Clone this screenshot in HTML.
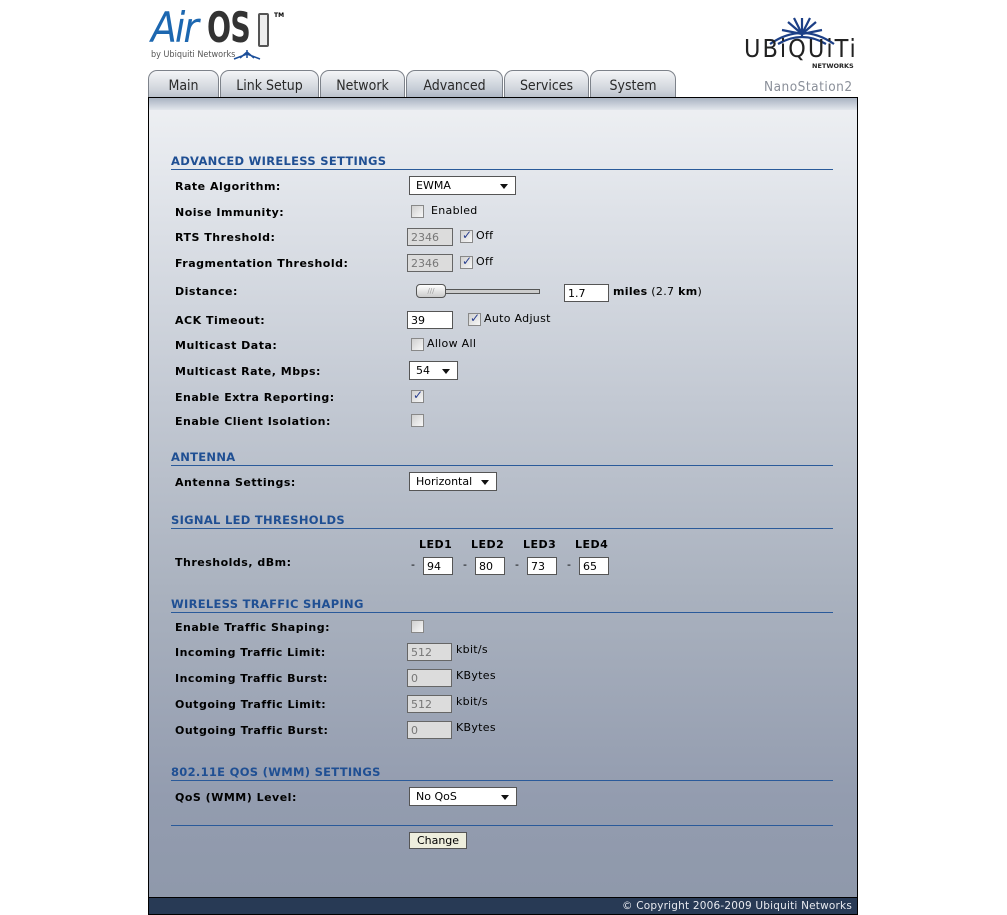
<!DOCTYPE html>
<html><head><meta charset="utf-8">
<style>
*{margin:0;padding:0;box-sizing:border-box}
body{width:1007px;height:915px;background:#fff;position:relative;overflow:hidden;font-family:"DejaVu Sans","Liberation Sans",sans-serif;font-size:11px;color:#000}
.a{position:absolute;white-space:nowrap}
.panel{position:absolute;left:148px;top:97px;width:710px;height:818px;border:1px solid #000;border-bottom:none;background:linear-gradient(#eef0f3 0px,#e6e9ee 60px,#c3c9d3 300px,#a9b1be 500px,#939caf 700px,#8e98aa 818px)}
.band{position:absolute;left:149px;top:98px;width:708px;height:12px;background:linear-gradient(#a9b3c2,#e2e6ec)}
.tab{position:absolute;top:70px;height:28px;border:1px solid #7d828a;border-bottom:none;border-radius:9px 9px 0 0;background:linear-gradient(#f4f5f7,#cfd4db 70%,#b8bfca);font-family:"DejaVu Sans Condensed","DejaVu Sans",sans-serif;font-size:14px;color:#2a2a2a;text-align:center;line-height:30px}
.tab.act{background:linear-gradient(#eef0f3,#c4cbd5 70%,#a9b3c2)}
.h{position:absolute;left:171px;font-weight:bold;color:#1f4f93;font-size:11.5px;letter-spacing:0.3px;transform:translateY(1px)}
.hl{position:absolute;left:171px;width:662px;height:1px;background:#2a5a9a}
.l{position:absolute;left:175px;font-weight:bold;font-size:11px;letter-spacing:0.5px;transform:translateY(1px)}
.sel{position:absolute;height:19px;border:1px solid #555;background:#fff;font-size:11px;line-height:18px;padding-left:6px}
.sel:after{content:"";position:absolute;right:7px;top:7px;border-left:4px solid transparent;border-right:4px solid transparent;border-top:5px solid #111}
.in{position:absolute;height:18px;border:1px solid #555;background:#fff;font-size:11px;line-height:17px;padding-left:3px}
.in.d{background:#dcdcdc;color:#777;border-color:#666}
.cb{position:absolute;width:13px;height:13px;border:1px solid #888;background:linear-gradient(135deg,#d0d0d0,#f8f8f8)}
.cb.k:after{content:"✓";position:absolute;left:1px;top:-3px;font-size:12px;color:#2a3f8f;font-weight:bold}
.t{position:absolute;font-size:11px;letter-spacing:0.3px;transform:translateY(1px)}
</style></head><body>

<!-- AirOS logo -->
<div class="a" style="left:151px;top:6px;font-family:'DejaVu Sans Condensed',sans-serif;font-style:italic;font-size:42px;color:#1c67b0;letter-spacing:-2px;line-height:44px">Air</div>
<div class="a" style="left:207px;top:6px;font-family:'DejaVu Sans Condensed',sans-serif;font-weight:bold;font-size:42px;color:#333;letter-spacing:-1px;line-height:44px;transform:scaleX(0.75);transform-origin:left">OS</div>
<div class="a" style="left:258px;top:13px;width:11px;height:34px;border:2px solid #555;border-radius:2px;background:#eee"></div>
<div class="a" style="left:274px;top:12px;font-size:6px;font-weight:bold">TM</div>
<div class="a" style="left:151px;top:50px;font-size:9px;color:#555;font-family:'DejaVu Sans Condensed',sans-serif">by Ubiquiti Networks</div>
<svg class="a" style="left:232px;top:49px" width="30" height="12"><path d="M2 10 L15 5 L28 10 M8 9 L15 3 L22 9 M15 1 L15 9" stroke="#1c4f9a" stroke-width="1.5" fill="none"/></svg>

<!-- Ubiquiti logo -->
<svg class="a" style="left:764px;top:16px" width="98" height="30"><g stroke="#1c3f86" stroke-width="2.2" fill="none"><path d="M6 28 Q38 6 70 28"/><path d="M14 28 Q38 14 62 28"/><path d="M38 2 L38 20 M24 6 L38 18 L52 6 M18 14 L38 18 L58 14 M30 2 L38 18 L46 2"/></g></svg>
<div class="a" style="left:744px;top:35px;font-family:'DejaVu Sans Condensed',sans-serif;font-size:25px;color:#222;letter-spacing:2px;line-height:28px">UBiQUiTi</div>
<div class="a" style="left:812px;top:62px;font-size:6.5px;font-weight:bold;color:#222">NETWORKS</div>

<!-- tabs -->
<div class="tab" style="left:148px;width:71px">Main</div>
<div class="tab" style="left:220px;width:99px">Link Setup</div>
<div class="tab" style="left:320px;width:85px">Network</div>
<div class="tab act" style="left:406px;width:97px">Advanced</div>
<div class="tab" style="left:504px;width:85px">Services</div>
<div class="tab" style="left:590px;width:86px">System</div>
<div class="a" style="left:764px;top:79px;font-size:13.5px;color:#8a8f99;font-family:'DejaVu Sans Condensed',sans-serif;letter-spacing:0.5px">NanoStation2</div>

<div class="panel"></div>
<div class="band"></div>

<!-- Advanced wireless -->
<div class="h" style="top:153px">ADVANCED WIRELESS SETTINGS</div>
<div class="hl" style="top:169px"></div>
<div class="l" style="top:179px">Rate Algorithm:</div>
<div class="sel" style="left:409px;top:176px;width:107px">EWMA</div>
<div class="l" style="top:205px">Noise Immunity:</div>
<div class="cb" style="left:411px;top:205px"></div><div class="t" style="left:431px;top:203px">Enabled</div>
<div class="l" style="top:230px">RTS Threshold:</div>
<div class="in d" style="left:407px;top:228px;width:46px">2346</div>
<div class="cb k" style="left:460px;top:230px"></div><div class="t" style="left:476px;top:228px">Off</div>
<div class="l" style="top:256px">Fragmentation Threshold:</div>
<div class="in d" style="left:407px;top:254px;width:46px">2346</div>
<div class="cb k" style="left:460px;top:256px"></div><div class="t" style="left:476px;top:254px">Off</div>
<div class="l" style="top:284px">Distance:</div>
<div class="a" style="left:444px;top:289px;width:96px;height:5px;background:#ccc;border:1px solid #555"></div>
<div class="a" style="left:416px;top:284px;width:30px;height:14px;border:1px solid #555;border-radius:4px;background:linear-gradient(#fff,#ccc);font-size:7px;color:#999;text-align:center;line-height:12px">///</div>
<div class="in" style="left:564px;top:284px;width:45px">1.7</div>
<div class="t" style="left:613px;top:284px"><b>miles</b> (2.7 <b>km</b>)</div>
<div class="l" style="top:313px">ACK Timeout:</div>
<div class="in" style="left:407px;top:311px;width:46px">39</div>
<div class="cb k" style="left:468px;top:313px"></div><div class="t" style="left:484px;top:311px">Auto Adjust</div>
<div class="l" style="top:338px">Multicast Data:</div>
<div class="cb" style="left:411px;top:338px"></div><div class="t" style="left:427px;top:336px">Allow All</div>
<div class="l" style="top:364px">Multicast Rate, Mbps:</div>
<div class="sel" style="left:409px;top:361px;width:49px">54</div>
<div class="l" style="top:390px">Enable Extra Reporting:</div>
<div class="cb k" style="left:411px;top:390px"></div>
<div class="l" style="top:414px">Enable Client Isolation:</div>
<div class="cb" style="left:411px;top:414px"></div>

<!-- Antenna -->
<div class="h" style="top:449px">ANTENNA</div>
<div class="hl" style="top:465px"></div>
<div class="l" style="top:475px">Antenna Settings:</div>
<div class="sel" style="left:409px;top:472px;width:88px">Horizontal</div>

<!-- LED -->
<div class="h" style="top:512px">SIGNAL LED THRESHOLDS</div>
<div class="hl" style="top:528px"></div>
<div class="l" style="left:419px;top:537px">LED1</div>
<div class="l" style="left:471px;top:537px">LED2</div>
<div class="l" style="left:523px;top:537px">LED3</div>
<div class="l" style="left:575px;top:537px">LED4</div>
<div class="l" style="top:555px">Thresholds, dBm:</div>
<div class="t" style="left:411px;top:557px">-</div><div class="in" style="left:423px;top:557px;width:30px">94</div>
<div class="t" style="left:463px;top:557px">-</div><div class="in" style="left:475px;top:557px;width:30px">80</div>
<div class="t" style="left:515px;top:557px">-</div><div class="in" style="left:527px;top:557px;width:30px">73</div>
<div class="t" style="left:567px;top:557px">-</div><div class="in" style="left:579px;top:557px;width:30px">65</div>

<!-- Traffic shaping -->
<div class="h" style="top:596px">WIRELESS TRAFFIC SHAPING</div>
<div class="hl" style="top:612px"></div>
<div class="l" style="top:620px">Enable Traffic Shaping:</div>
<div class="cb" style="left:411px;top:620px"></div>
<div class="l" style="top:645px">Incoming Traffic Limit:</div>
<div class="in d" style="left:407px;top:643px;width:45px">512</div><div class="t" style="left:456px;top:642px">kbit/s</div>
<div class="l" style="top:671px">Incoming Traffic Burst:</div>
<div class="in d" style="left:407px;top:669px;width:45px">0</div><div class="t" style="left:456px;top:668px">KBytes</div>
<div class="l" style="top:697px">Outgoing Traffic Limit:</div>
<div class="in d" style="left:407px;top:695px;width:45px">512</div><div class="t" style="left:456px;top:694px">kbit/s</div>
<div class="l" style="top:723px">Outgoing Traffic Burst:</div>
<div class="in d" style="left:407px;top:721px;width:45px">0</div><div class="t" style="left:456px;top:720px">KBytes</div>

<!-- QoS -->
<div class="h" style="top:764px">802.11E QOS (WMM) SETTINGS</div>
<div class="hl" style="top:780px"></div>
<div class="l" style="top:790px">QoS (WMM) Level:</div>
<div class="sel" style="left:409px;top:787px;width:108px">No QoS</div>

<div class="hl" style="top:825px"></div>
<div class="a" style="left:409px;top:832px;width:58px;height:17px;border:1px solid #555;background:#eeeedd;text-align:center;line-height:16px;font-size:11px">Change</div>

<div class="a" style="left:148px;top:897px;width:710px;height:18px;background:#283a55;border:1px solid #000;color:#e8eaf0;font-size:10.5px;text-align:right;padding-right:5px;line-height:17px;letter-spacing:0.2px">© Copyright 2006-2009 Ubiquiti Networks</div>
</body></html>
